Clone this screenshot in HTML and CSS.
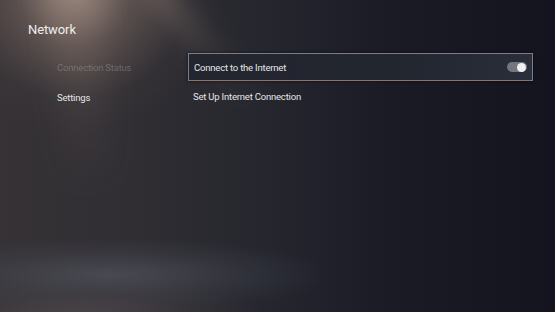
FILE: index.html
```html
<!DOCTYPE html>
<html>
<head>
<meta charset="utf-8">
<link rel="stylesheet" href="styles.css">
</head>
<body>
<div class="screen">
  <div class="glow-top"></div>
  <div class="beam"></div>
  <div class="beam beam-2"></div>
  <div class="glow-band"></div>
  <div class="glow-bottom"></div>
  <h1 class="title">Network</h1>
  <div class="content">
    <nav class="menu">
      <div class="menu-item dim">Connection Status</div>
      <div class="menu-item">Settings</div>
    </nav>
    <div class="list">
      <div class="row selected">
        <span>Connect to the Internet</span>
        <span class="toggle"><span class="knob"></span></span>
      </div>
      <div class="row">
        <span>Set Up Internet Connection</span>
      </div>
    </div>
  </div>
</div>
</body>
</html>
```
FILE: styles.css
```css
html, body { margin: 0; padding: 0; }
body { background: #12131d; font-family: Roboto, "Open Sans", sans-serif; }
.screen {
  position: relative;
  width: 555px;
  height: 312px;
  overflow: hidden;
  background: linear-gradient(90deg, #363236 0%, #302e33 25%, #25262e 48%, #1a1b25 70%, #13141e 100%);
  color: #e8e8ea;
}
.glow-top {
  position: absolute;
  left: -70px; top: -120px;
  width: 290px; height: 250px;
  background: radial-gradient(ellipse at 50% 45%, rgba(185,160,145,0.75) 0%, rgba(135,115,105,0.45) 28%, rgba(80,70,70,0.15) 55%, rgba(60,55,60,0) 72%);
}
.beam {
  position: absolute;
  left: 55px; top: -40px;
  width: 50px; height: 230px;
  transform: rotate(-6deg);
  background: linear-gradient(180deg, rgba(160,140,130,0.4) 0%, rgba(125,110,105,0.18) 50%, rgba(100,90,90,0) 100%);
  filter: blur(14px);
}
.beam-2 {
  left: 185px; top: -40px;
  width: 30px; height: 160px;
  transform: rotate(-42deg);
  background: linear-gradient(180deg, rgba(150,130,120,0.35) 0%, rgba(115,100,95,0.14) 60%, rgba(90,80,80,0) 100%);
  filter: blur(10px);
}
.glow-band {
  position: absolute;
  left: -60px; top: 240px;
  width: 380px; height: 70px;
  background: radial-gradient(ellipse at 45% 50%, rgba(95,100,112,0.5) 0%, rgba(75,80,92,0.25) 45%, rgba(50,52,62,0) 75%);
}
.glow-bottom {
  position: absolute;
  left: -60px; top: 280px;
  width: 320px; height: 80px;
  background: radial-gradient(ellipse at 45% 50%, rgba(100,90,92,0.55) 0%, rgba(80,72,76,0.25) 45%, rgba(60,55,60,0) 75%);
}
.title {
  position: relative;
  margin: 0;
  padding: 21px 0 0 28px;
  font-size: 13px;
  font-weight: 400;
  line-height: 18px;
  letter-spacing: -0.1px;
  color: #eeeeee;
}
.content {
  position: relative;
  display: grid;
  grid-template-columns: 131px 345px;
  margin: 14px 0 0 57px;
}
.menu { display: flex; flex-direction: column; padding-top: 9px; }
.menu-item { font-size: 9.5px; line-height: 12px; height: 30px; color: #e4e4e6; letter-spacing: -0.2px; }
.menu-item.dim { color: rgba(200,195,195,0.32); }
.list { display: flex; flex-direction: column; }
.row {
  display: flex;
  align-items: center;
  justify-content: space-between;
  height: 28px;
  padding: 0 5px 0 5px;
  font-size: 9.5px;
  letter-spacing: -0.2px;
  color: #e6e6e8;
  box-sizing: border-box;
}
.row.selected {
  border: 1px solid #7b7d88;
  border-bottom-color: #8a7566;
  background: linear-gradient(90deg, #23252f 0%, #22262f 60%, #2a2e3a 100%);
  box-shadow: 0 0 3px rgba(0,0,0,0.6);
}
.row + .row { height: 30px; }
.toggle {
  display: inline-flex;
  align-items: center;
  justify-content: flex-end;
  width: 20px; height: 10px;
  border-radius: 5px;
  background: #74767e;
  margin-right: 0;
  padding-right: 1px;
  box-sizing: border-box;
}
.knob { width: 9px; height: 9px; border-radius: 50%; background: #f0f0f2; }
```
